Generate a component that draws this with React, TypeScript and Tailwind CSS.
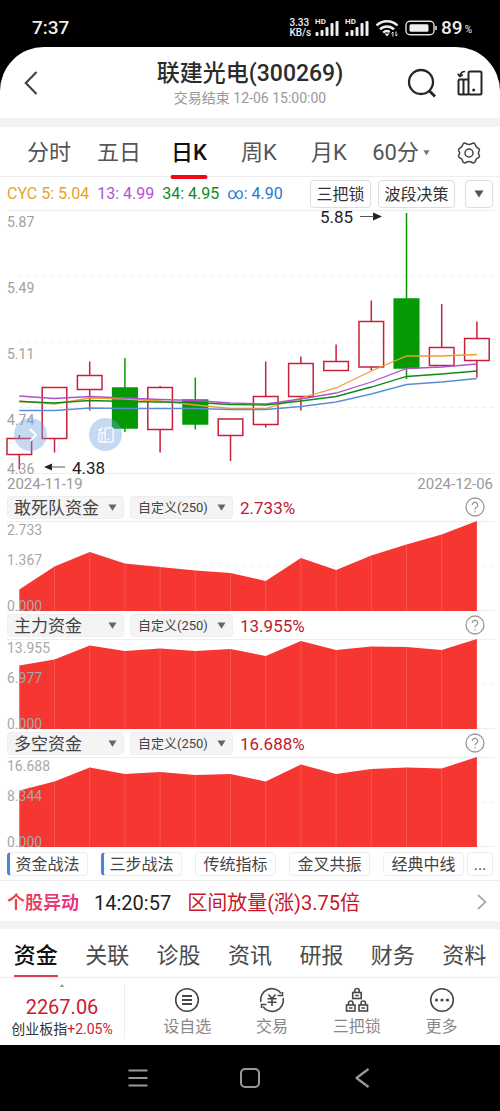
import { useState } from 'react';
import type { ReactNode } from 'react';

type Candle = { up: boolean; high: number; top: number; bottom: number; low: number };

const STEP = 35.2;
const FIRST_X = 19.3;
const xAt = (i: number) => FIRST_X + i * STEP;

const periods = ['分时', '五日', '日K', '周K', '月K'];
const infoTabs = ['资金', '关联', '诊股', '资讯', '研报', '财务', '资料'];

const averages = [
  { text: 'CYC 5: 5.04', color: 'text-[#e9a227]' },
  { text: '13: 4.99', color: 'text-[#b352d0]' },
  { text: '34: 4.95', color: 'text-[#128a1b]' },
  { text: '∞: 4.90', color: 'text-[#1f78d1]' },
];

const candles: Candle[] = [
  { up: true, high: 225, top: 228.5, bottom: 244.5, low: 259.5 },
  { up: true, high: 177.5, top: 177.5, bottom: 228.5, low: 242.5 },
  { up: true, high: 151.5, top: 165.5, bottom: 179.5, low: 200.5 },
  { up: false, high: 148, top: 178, bottom: 218, low: 222 },
  { up: true, high: 176, top: 177.5, bottom: 219.5, low: 242.5 },
  { up: false, high: 167.5, top: 190, bottom: 214, low: 219.5 },
  { up: true, high: 209, top: 209, bottom: 225.5, low: 251 },
  { up: true, high: 151.5, top: 186.5, bottom: 214.5, low: 217.5 },
  { up: true, high: 146.5, top: 153.5, bottom: 186.5, low: 200.5 },
  { up: true, high: 134.5, top: 151.5, bottom: 160.5, low: 160.5 },
  { up: true, high: 90.5, top: 111.5, bottom: 157, low: 160.5 },
  { up: false, high: 3, top: 89, bottom: 158, low: 169 },
  { up: true, high: 94, top: 137.5, bottom: 155.5, low: 155.5 },
  { up: true, high: 111.5, top: 128.5, bottom: 150.5, low: 167.5 },
];

const maLines = [
  { color: '#e9a030', ys: [191, 194, 188, 189, 191, 195, 198.5, 198.5, 188, 178, 161, 146, 146, 144.5] },
  { color: '#b352d0', ys: [186, 188.5, 186.5, 188, 189.5, 190.5, 193, 194, 189, 183, 172, 158.5, 157, 154] },
  { color: '#128a1b', ys: [191.5, 193, 190.5, 191.5, 192, 192.5, 194.5, 195, 191, 186.5, 177, 166.5, 164, 161] },
  { color: '#5b8fd4', ys: [200.5, 200.5, 198, 198.5, 198.5, 198.5, 199.5, 199.5, 196.5, 192, 184, 174.5, 172, 168.5] },
];

const funds = [
  {
    name: '敢死队资金',
    value: '2.733%',
    labels: ['2.733', '1.367', '0.000'],
    ys: [68.5, 45.5, 31, 42.5, 46, 49.5, 52, 60, 37, 49, 34.5, 23.5, 13.5, 0],
  },
  {
    name: '主力资金',
    value: '13.955%',
    labels: ['13.955', '6.977', '0.000'],
    ys: [26.5, 20.5, 6.5, 12, 9.5, 12, 10, 17, 2, 11, 7.5, 8, 11, 0],
  },
  {
    name: '多空资金',
    value: '16.688%',
    labels: ['16.688', '8.344', '0.000'],
    ys: [33.5, 24.5, 10.5, 17, 15, 18, 17, 24.5, 7.5, 17, 12, 10.5, 11.5, 0],
  },
];

const methods = [
  { name: '资金战法', mark: true },
  { name: '三步战法', mark: true },
  { name: '传统指标', mark: false },
  { name: '金叉共振', mark: false },
  { name: '经典中线', mark: false },
];

const toPoints = (ys: number[]) => ys.map((y, i) => `${xAt(i)},${y}`).join(' ');

function Triangle({ className }: { className?: string }) {
  return (
    <svg viewBox="0 0 10 8" className={className} aria-hidden="true">
      <path d="M0.5 0.5h9L5 7.5z" fill="currentColor" />
    </svg>
  );
}

function Signal() {
  return (
    <div className="relative h-5 w-6">
      <span className="absolute left-0 top-0 text-[8px] leading-[8px] font-bold">HD</span>
      <svg viewBox="0 0 24 20" className="h-5 w-6" fill="#eee">
        <rect x="0.5" y="14" width="3" height="4" rx="1" />
        <rect x="5.5" y="12" width="3" height="6" rx="1" />
        <rect x="10.5" y="9" width="3" height="9" rx="1" />
        <rect x="15.5" y="5" width="3" height="13" rx="1" />
        <rect x="20.500" y="3" width="3" height="15" rx="1" />
      </svg>
    </div>
  );
}

function StatusBar() {
  return (
    <div className="flex h-[47px] items-center justify-between pt-2 pr-7 pl-8 text-[#eee]">
      <span className="text-[19px] leading-6 font-medium">7:37</span>
      <div className="flex items-center">
        <div className="mr-1 text-[10px] leading-[10px] font-medium">
          <div>3.33</div>
          <div>KB/s</div>
        </div>
        <Signal />
        <div className="ml-1.5">
          <Signal />
        </div>
        <svg viewBox="0 0 24 20" className="ml-1.5 h-5 w-6" fill="none" stroke="#eee" strokeWidth="2.4">
          <path d="M1.5 7.5a15 15 0 0 1 21 0" />
          <path d="M5 11.3a10 10 0 0 1 14 0" />
          <path d="M8.2 14.6a5.5 5.5 0 0 1 6.6-.6" />
          <path d="M9.5 15.5L12 18.5l2.5-3z" fill="#eee" stroke="none" />
          <path d="M18 18.5v-4.5l-1.5 1.5M21 13.5v4.5l1.5-1.5" strokeWidth="1" />
        </svg>
        <svg viewBox="0 0 34 16" className="ml-1.5 h-4 w-[34px]" fill="none">
          <rect x="1" y="1.2" width="28" height="13.6" rx="4" stroke="#ddd" strokeWidth="1.4" />
          <rect x="4.5" y="4.2" width="19" height="7.6" rx="1.5" fill="#eee" />
          <path d="M31 6.500v3" stroke="#ddd" strokeWidth="1.600" strokeLinecap="round" />
        </svg>
        <span className="ml-0.5 text-[19px] leading-6 font-medium">89</span>
        <span className="mt-1 ml-0.5 text-[10px] leading-4">%</span>
      </div>
    </div>
  );
}

function RotateIcon({ className }: { className?: string }) {
  return (
    <svg viewBox="0 0 26 26" className={className} fill="none" stroke="currentColor" strokeWidth="2" strokeLinejoin="round">
      <rect x="11.5" y="1.5" width="13" height="23" rx="1.5" />
      <path d="M11.5 9.5H3A1.5 1.5 0 0 0 1.5 11v12A1.5 1.5 0 0 0 3 24.5h8.5M6.5 9.5v15" />
      <path d="M8 1.5C5 1.5 3.5 3 3 6M0.8 3.8L2.8 6.5l3-1.7" strokeWidth="1.7" />
      <circle cx="16.7" cy="20" r="1.5" fill="currentColor" stroke="none" />
    </svg>
  );
}

function Header() {
  return (
    <header className="grid h-[71px] grid-cols-[1fr_auto_1fr] items-center">
      <button className="justify-self-start pl-6" aria-label="返回">
        <svg viewBox="0 0 14 24" className="h-6 w-3.5" fill="none" stroke="#444" strokeWidth="2.2">
          <path d="M12.5 1L1.8 12l10.7 11" />
        </svg>
      </button>
      <div className="pt-0.5 text-center">
        <h1 className="text-[23px] leading-7 font-medium text-[#2c2c2c]">联建光电(300269)</h1>
        <p className="text-sm text-[#999]">交易结束 12-06 15:00:00</p>
      </div>
      <div className="flex items-center gap-5 justify-self-end pr-[17px] text-[#262626]">
        <button aria-label="搜索">
          <svg viewBox="0 0 30 30" className="h-[30px] w-[30px]" fill="none" stroke="currentColor" strokeWidth="2.3">
            <circle cx="14" cy="14" r="12" />
            <path d="M22 22.5l6 6" strokeWidth="2.8" />
          </svg>
        </button>
        <button aria-label="横屏">
          <RotateIcon className="h-[26px] w-[26px]" />
        </button>
      </div>
    </header>
  );
}

function PeriodTabs() {
  const [active, setActive] = useState('日K');
  return (
    <nav className="grid h-[50px] grid-cols-[repeat(5,70fr)_74fr_62fr] border-b border-[#eee] pl-3.5 text-[22px] leading-[52px] text-[#555]">
      {periods.map((p) => (
        <button
          key={p}
          onClick={() => setActive(p)}
          className={`relative ${p === active ? 'font-medium text-[#111]' : ''}`}
        >
          {p}
          {p === active && <span className="absolute bottom-0 left-1/2 h-1 w-[37px] -translate-x-1/2 rounded-full bg-[#ee0a14]" />}
        </button>
      ))}
      <button className="flex items-center justify-center gap-1">
        60分
        <Triangle className="w-[7px] text-[#777]" />
      </button>
      <button className="flex items-center justify-center" aria-label="设置">
        <svg viewBox="0 0 24 24" className="h-6 w-6" fill="none" stroke="#444" strokeWidth="1.5" strokeLinejoin="round">
          <path d="M8.3 2.2Q7 1.6 6.2 2.8L5 5.4Q4.5 6.3 3.5 6.8Q1.5 7.5 1.5 9Q1.6 9.8 2.2 10.5Q3.1 12 2.2 13.5Q1.6 14.2 1.5 15Q1.5 16.5 3.5 17.2Q4.5 17.7 5 18.6L6.2 21.2Q7 22.4 8.3 21.8L10 21Q12 20.2 14 21L15.7 21.8Q17 22.4 17.8 21.2L19 18.6Q19.5 17.7 20.5 17.2Q22.5 16.5 22.5 15Q22.4 14.2 21.8 13.5Q20.9 12 21.8 10.5Q22.4 9.8 22.5 9Q22.5 7.5 20.5 6.8Q19.5 6.3 19 5.4L17.8 2.8Q17 1.6 15.7 2.2L14 3Q12 3.8 10 3Z" />
          <circle cx="12" cy="12" r="4" />
        </svg>
      </button>
    </nav>
  );
}

function AverageRow() {
  return (
    <div className="flex h-[33px] items-center justify-between px-[7px]">
      <div className="flex gap-2 text-base">
        {averages.map((a) => (
          <span key={a.text} className={a.color}>
            {a.text}
          </span>
        ))}
      </div>
      <div className="flex text-base text-[#333]">
        <button className="h-7 w-[61px] rounded border border-[#ddd] leading-[28px]">三把锁</button>
        <button className="ml-[7px] h-7 w-[77px] rounded border border-[#ddd] leading-[28px]">波段决策</button>
        <button className="ml-2.5 flex h-7 w-7 items-center justify-center rounded border border-[#ddd]" aria-label="更多指标">
          <Triangle className="w-2.5 text-[#555]" />
        </button>
      </div>
    </div>
  );
}

function PriceChart() {
  return (
    <section>
      <div className="relative">
        <svg viewBox="0 0 500 264" className="block w-full overflow-visible" fill="none">
          <path d="M7 0.5H495M7 263.5H495" stroke="#eee" />
          <path d="M19 66.5H495M19 132.5H495M19 197.5H495" stroke="#eee" strokeDasharray="4 4" />
          {candles.map((c, i) => {
            const x = xAt(i);
            const color = c.up ? '#c9203a' : '#059a05';
            return (
              <g key={i} stroke={color} strokeWidth="1.5">
                <path d={`M${x} ${c.high}V${c.top}M${x} ${c.bottom}V${c.low}`} />
                <rect x={x - 12.3} y={c.top} width="24.6" height={c.bottom - c.top} fill={c.up ? 'none' : color} />
              </g>
            );
          })}
          {maLines.map((l) => (
            <polyline key={l.color} points={toPoints(l.ys)} stroke={l.color} strokeWidth="1.3" />
          ))}
          <g fill="#222" fontSize="17">
            <text x="320" y="13">5.85</text>
            <text x="72" y="264">4.38</text>
            <path d="M373 2.5l9 4-9 4z" />
            <path d="M52 253.5l-8 3.5 8 3.5z" />
          </g>
          <path d="M360 6.5h14M51 257h14" stroke="#555" />
        </svg>
        <div className="absolute inset-y-0 left-[7px] text-sm text-[#a0a0a0]">
          <div className="flex h-full flex-col">
            <span className="flex-1 pt-0.5">5.87</span>
            <span className="flex-1 pt-0.5">5.49</span>
            <span className="flex-1 pt-0.5">5.11</span>
            <span className="flex flex-1 flex-col justify-between pt-0.5">
              <span>4.74</span>
              <span className="leading-[10px]">4.36</span>
            </span>
          </div>
        </div>
        <button
          className="absolute bottom-[23px] left-[14px] flex h-[33px] w-[33px] items-center justify-center rounded-full bg-[#6fa0e0]/40"
          aria-label="展开"
        >
          <svg viewBox="0 0 12 14" className="ml-1 h-3.5 w-3" fill="none" stroke="#fff" strokeWidth="2">
            <path d="M3 1l6 6-6 6" />
          </svg>
        </button>
        <button
          className="absolute bottom-[23px] left-[89px] flex h-[33px] w-[33px] items-center justify-center rounded-full bg-[#6fa0e0]/40 text-white"
          aria-label="横屏查看"
        >
          <RotateIcon className="h-4 w-4" />
        </button>
      </div>
      <div className="flex h-[19px] justify-between px-[7px] text-[15px] leading-[21px] text-[#999]">
        <span>2024-11-19</span>
        <span>2024-12-06</span>
      </div>
    </section>
  );
}

function Picker({ label, options, className }: { label: string; options: string[]; className: string }) {
  return (
    <div className="relative">
      <select
        aria-label={label}
        className={`block h-[23px] appearance-none rounded-sm border border-[#eee] bg-[#f4f4f4] pt-px text-[#444] ${className}`}
      >
        {options.map((o) => (
          <option key={o}>{o}</option>
        ))}
      </select>
      <Triangle className="pointer-events-none absolute top-2 right-[7px] w-[9px] text-[#666]" />
    </div>
  );
}

function FundPanel({ name, value, labels, ys }: (typeof funds)[number]) {
  const lastX = xAt(ys.length - 1);
  return (
    <section>
      <div className="flex h-7 items-center pr-[15px] pl-[7px]">
        <Picker label="指标" options={[name]} className="w-[117px] pl-1.5 text-[17px] leading-5" />
        <div className="ml-1.5">
          <Picker label={`${name}参数`} options={['自定义(250)']} className="w-[103px] pl-[7px] text-[13px] leading-5" />
        </div>
        <span className="ml-[7px] pt-0.5 text-[17px] leading-6 text-[#c0182f]">{value}</span>
        <button className="ml-auto" aria-label={`${name}说明`}>
          <svg viewBox="0 0 20 20" className="h-5 w-5" fill="none" stroke="#999" strokeWidth="1.3">
            <circle cx="10" cy="10" r="9" />
            <path d="M7.3 8a2.7 2.7 0 1 1 4.2 2.2c-1 .7-1.5 1-1.5 2.3" />
            <circle cx="10" cy="14.7" r=".8" fill="#999" stroke="none" />
          </svg>
        </button>
      </div>
      <div className="relative">
        <svg viewBox="0 0 500 90" className="block w-full" fill="none">
          <path d="M7 0.5H495M7 89.5H495" stroke="#eee" />
          <path d="M19 45.5H495" stroke="#eee" strokeDasharray="4 4" />
          <polygon points={`${FIRST_X},90 ${toPoints(ys)} ${lastX},90`} fill="#f53631" />
          {ys.slice(1, -1).map((y, i) => (
            <path key={i} d={`M${xAt(i + 1)} ${y}V90`} stroke="#fb6a5e" strokeOpacity=".6" />
          ))}
        </svg>
        <div className="absolute inset-y-0 left-[7px] flex flex-col text-sm leading-[18px] text-[#a8a8a8]">
          <span>{labels[0]}</span>
          <span className="mt-3">{labels[1]}</span>
          <span className="mt-auto leading-[10px]">{labels[2]}</span>
        </div>
      </div>
    </section>
  );
}

function MethodRow() {
  return (
    <div className="flex h-[34px] items-center border-b border-[#eee] px-[7px] text-base leading-6 text-[#444]">
      <div className="flex min-w-0 flex-1 gap-[13px] overflow-hidden">
        {methods.map((m) => (
          <button
            key={m.name}
            className={`h-6 w-[81px] shrink-0 rounded-sm border border-[#eee] ${
              m.mark ? 'border-l-[3px] border-l-[#4a84dc] pr-0.5' : ''
            }`}
          >
            {m.name}
          </button>
        ))}
      </div>
      <button className="h-6 w-[26px] shrink-0 rounded-sm border border-[#eee]">...</button>
    </div>
  );
}

function AlertRow() {
  return (
    <a href="#alert" className="flex h-10 items-center px-[7px] pt-0.5 text-[20px]">
      <strong className="bg-gradient-to-r from-[#f0453a] to-[#ea2f8a] bg-clip-text text-[18px] font-bold text-transparent">个股异动</strong>
      <time className="ml-[15px] pt-0.5 text-[#222]">14:20:57</time>
      <span className="ml-4 pt-0.5 text-[#c8172d]">区间放量(涨)3.75倍</span>
      <svg viewBox="0 0 10 16" className="mr-1.5 ml-auto h-4 w-2.5" fill="none" stroke="#aaa" strokeWidth="1.8">
        <path d="M1 1l7.5 7L1 15" />
      </svg>
    </a>
  );
}

function InfoTabs() {
  const [active, setActive] = useState('资金');
  return (
    <nav className="grid h-[49px] grid-cols-7 border-b border-[#eee] text-[22px] leading-[54px] text-[#4a4a4a]">
      {infoTabs.map((t) => (
        <button key={t} onClick={() => setActive(t)} className={`relative h-12 ${t === active ? 'font-medium text-[#111]' : ''}`}>
          <span className="block h-12">{t}</span>
          {t === active && <span className="absolute bottom-0 left-1/2 h-0.5 w-11 -translate-x-1/2 bg-[#d8414f]" />}
        </button>
      ))}
    </nav>
  );
}

function Action({ label, children }: { label: string; children: ReactNode }) {
  return (
    <button className="flex flex-col items-center text-base leading-6 text-[#888]">
      <svg viewBox="0 0 26 26" className="mb-0.5 h-[26px] w-[26px]" fill="none" stroke="#484848" strokeWidth="1.6">
        {children}
      </svg>
      {label}
    </button>
  );
}

function Padlock({ x, y }: { x: number; y: number }) {
  return (
    <g transform={`translate(${x} ${y})`}>
      <rect x="0" y="4.5" width="8.5" height="6" />
      <path d="M2 4.5V2.700a2.250 2.250 0 0 1 4.500 0v1.800M2.500 7.500h3.500" />
    </g>
  );
}

function BottomBar() {
  return (
    <footer className="flex h-[67px]">
      <div className="my-1.5 flex w-[125px] shrink-0 flex-col items-center border-r border-[#eee]">
        <svg viewBox="0 0 6 4" className="h-1 w-1.5">
          <path d="M3 0l3 4H0z" fill="#999" />
        </svg>
        <span className="mt-2 text-[20px] leading-6 text-[#cc1a30]">2267.06</span>
        <span className="text-sm text-[#333]">
          创业板指<span className="text-[#cc1a30]">+2.05%</span>
        </span>
      </div>
      <div className="grid flex-1 grid-cols-4 pt-[9px] pr-4 pl-5">
        <Action label="设自选">
          <circle cx="13" cy="13" r="11.3" />
          <path d="M8 9h10M8 13h10M8 17h10" strokeWidth="1.8" />
        </Action>
        <Action label="交易">
          <path d="M1.8 15A11.3 11.3 0 0 1 22 6.2M24.2 11A11.3 11.3 0 0 1 4 19.8" />
          <path d="M18.500 8.500h5V5M7.500 17.500h-5v3.500" />
          <path d="M9.5 7.5L13 11.5l3.5-4M13 11.5v7.5M8.5 11.8h9M8.5 15.2h9" />
        </Action>
        <Action label="三把锁">
          <Padlock x={8.7} y={1} />
          <Padlock x={2.5} y={13.5} />
          <Padlock x={15} y={13.5} />
        </Action>
        <Action label="更多">
          <circle cx="13" cy="13" r="11.3" />
          <g fill="#484848" stroke="none">
            <circle cx="7.5" cy="13" r="1.6" />
            <circle cx="13" cy="13" r="1.6" />
            <circle cx="18.5" cy="13" r="1.6" />
          </g>
        </Action>
      </div>
    </footer>
  );
}

function SystemNav() {
  return (
    <div className="flex h-[66px] items-center justify-center gap-[92px] bg-black">
      <button aria-label="任务">
        <svg viewBox="0 0 20 20" className="h-5 w-5" stroke="#999" strokeWidth="2.2">
          <path d="M0.5 2.5h19M0.5 10h19M0.5 17.5h19" />
        </svg>
      </button>
      <button aria-label="主页">
        <svg viewBox="0 0 20 20" className="h-5 w-5" fill="none" stroke="#999" strokeWidth="2">
          <rect x="1" y="1" width="18" height="18" rx="4" />
        </svg>
      </button>
      <button aria-label="后退">
        <svg viewBox="0 0 20 20" className="h-5 w-5" fill="none" stroke="#999" strokeWidth="2.2" strokeLinejoin="round">
          <path d="M16.5 1L4.5 10l12 9" />
        </svg>
      </button>
    </div>
  );
}

export default function App() {
  return (
    <div className="bg-black font-[Roboto,'Noto_Sans_CJK_SC',sans-serif]">
      <StatusBar />
      <main className="overflow-hidden rounded-t-[44px] bg-white">
        <Header />
        <div className="h-[9px] bg-[#f3f3f3]" />
        <PeriodTabs />
        <AverageRow />
        <PriceChart />
        {funds.map((f) => (
          <FundPanel key={f.name} {...f} />
        ))}
        <MethodRow />
        <AlertRow />
        <div className="h-2 bg-[#f3f3f3]" />
        <InfoTabs />
        <BottomBar />
      </main>
      <SystemNav />
    </div>
  );
}
